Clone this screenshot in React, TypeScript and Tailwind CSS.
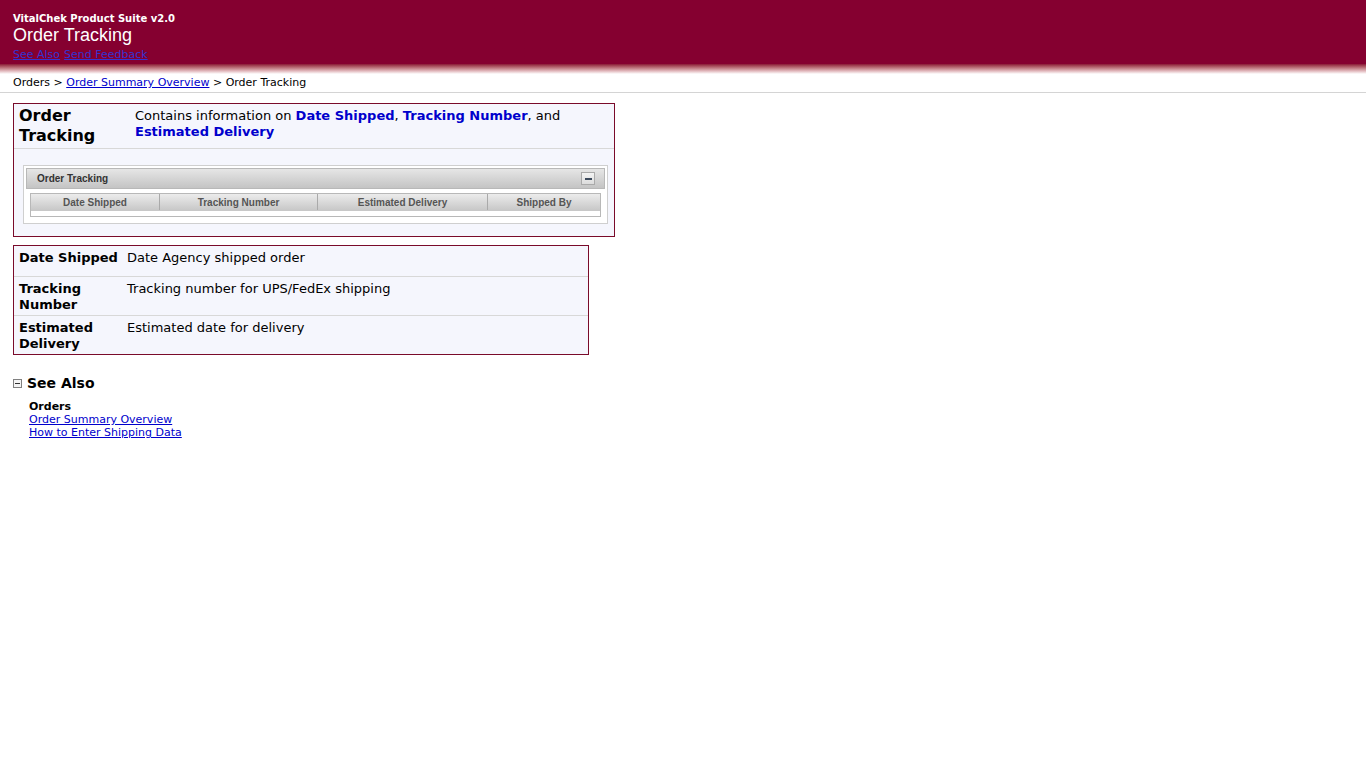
import React from "react";

const verdana = { fontFamily: '"DejaVu Sans", Verdana, sans-serif' };

function MinusBox({ className = "" }: { className?: string }) {
  return (
    <svg width="9" height="9" viewBox="0 0 9 9" className={className}>
      <rect x="0.5" y="0.5" width="8" height="8" fill="#f4f4f4" stroke="#808080" />
      <rect x="2" y="4" width="5" height="1" fill="#333" />
    </svg>
  );
}

function TrackingGrid() {
  const cols = [
    { label: "Date Shipped", w: "w-[128px]" },
    { label: "Tracking Number", w: "w-[158px]" },
    { label: "Estimated Delivery", w: "w-[170px]" },
    { label: "Shipped By", w: "flex-1" },
  ];
  return (
    <div className="mt-[16px] mr-[6px] mb-[12px] ml-[9px] border border-[#cfcfcf] bg-white px-[2px] pt-[2px] pb-[6px]">
      <div className="flex h-[21px] items-center justify-between border border-[#b8b8b8] bg-gradient-to-b from-[#e6e6e6] to-[#c4c4c4] pl-[10px] pr-[9px]">
        <span className="font-['Liberation_Sans',Arial,sans-serif] text-[10px] font-bold text-[#333]">
          Order Tracking
        </span>
        <div className="flex h-[13px] w-[14px] items-center justify-center border border-[#aaa] bg-gradient-to-b from-[#f4f4f4] to-[#dcdcdc]">
          <div className="h-[2px] w-[7px] bg-[#3c4a5c]" />
        </div>
      </div>
      <div className="mx-[4px] mt-[4px] border border-[#b8b8b8]">
        <div className="flex h-[16px] bg-gradient-to-b from-[#ececec] to-[#c8c8c8]">
          {cols.map((c, i) => (
            <div
              key={c.label}
              className={`${c.w} flex items-center justify-center font-['Liberation_Sans',Arial,sans-serif] text-[10px] font-bold text-[#555] ${
                i > 0 ? "border-l border-[#aaa]" : ""
              }`}
            >
              {c.label}
            </div>
          ))}
        </div>
        <div className="h-[6px] border-t border-[#c8c8c8] bg-white" />
      </div>
    </div>
  );
}

export default function App() {
  const defs = [
    { term: "Date Shipped", desc: "Date Agency shipped order" },
    { term: "Tracking Number", desc: "Tracking number for UPS/FedEx shipping" },
    { term: "Estimated Delivery", desc: "Estimated date for delivery" },
  ];

  return (
    <main className="min-h-screen bg-white text-black" style={verdana}>
      <header className="bg-gradient-to-b from-[#850030] from-[86%] to-white px-[13px] pt-[12px] pb-[12px]">
        <div className="font-['DejaVu_Sans',Tahoma,sans-serif] text-[10px] leading-[13px] font-bold text-white">
          VitalChek Product Suite v2.0
        </div>
        <div className="font-['Liberation_Sans',Arial,sans-serif] text-[18px] leading-[20px] text-white">
          Order Tracking
        </div>
        <div className="mt-[3px] flex gap-[4px] font-['DejaVu_Sans',Tahoma,sans-serif] text-[11px] leading-[14px]">
          <a href="#" className="text-[#3333d0] underline">See Also</a>
          <a href="#" className="text-[#3333d0] underline">Send Feedback</a>
        </div>
      </header>

      <nav className="border-b border-[#d4d4d4] px-[13px] pt-[2px] pb-[2px] text-[11px] leading-[14px]">
        Orders &gt;{" "}
        <a href="#" className="text-[#0000cc] underline">Order Summary Overview</a>{" "}
        &gt; Order Tracking
      </nav>

      <div className="px-[13px] pt-[10px]">
        <section className="w-[602px] border border-[#7a0b2a] bg-[#f5f6fd]">
          <div className="flex border-b border-[#d8d8d8] px-[5px] pt-[2px] pb-[2px]">
            <h1 className="w-[116px] shrink-0 text-[16px] leading-[20px] font-bold">
              Order Tracking
            </h1>
            <p className="pt-[2px] text-[13px] leading-[16px]">
              Contains information on{" "}
              <b className="text-[#0000cc]">Date Shipped</b>,{" "}
              <b className="text-[#0000cc]">Tracking Number</b>, and{" "}
              <b className="text-[#0000cc]">Estimated Delivery</b>
            </p>
          </div>
          <TrackingGrid />
        </section>

        <section className="mt-[8px] w-[576px] border border-[#7a0b2a] bg-[#f5f6fd]">
          {defs.map((d, i) => (
            <div
              key={d.term}
              className={`flex px-[5px] pt-[4px] pb-[2px] text-[13px] leading-[16px] ${
                i > 0 ? "border-t border-[#d8d8d8]" : ""
              }`}
            >
              <div className="w-[108px] shrink-0 font-bold">{d.term}</div>
              <div className="min-h-[24px]">{d.desc}</div>
            </div>
          ))}
        </section>

        <section className="mt-[19px]">
          <div className="flex items-center gap-[5px]">
            <MinusBox />
            <h2 className="text-[14px] leading-[18px] font-bold">See Also</h2>
          </div>
          <div className="mt-[8px] pl-[16px] text-[11px] leading-[13px]">
            <div className="font-bold">Orders</div>
            <a href="#" className="block text-[#0000cc] underline">Order Summary Overview</a>
            <a href="#" className="block text-[#0000cc] underline">How to Enter Shipping Data</a>
          </div>
        </section>
      </div>
    </main>
  );
}
